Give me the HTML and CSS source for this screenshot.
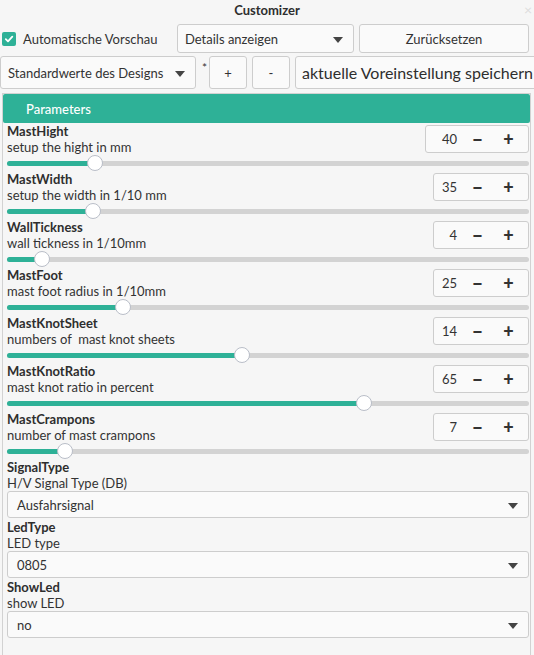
FILE: index.html
```html
<!DOCTYPE html>
<html>
<head>
<meta charset="utf-8">
<link rel="stylesheet" href="styles.css">
</head>
<body>
<div class="window">
  <div class="titlebar">Customizer<span class="close">×</span></div>
  <div class="row1">
    <label class="check"><span class="box"><svg width="10" height="10" viewBox="0 0 10 10"><path d="M1.8 5.2 L4 7.3 L8.3 2.6" fill="none" stroke="#fff" stroke-width="1.8" stroke-linecap="round" stroke-linejoin="round"/></svg></span>Automatische Vorschau</label>
    <div class="select details">Details anzeigen<span class="caret"></span></div>
    <div class="btn reset">Zurücksetzen</div>
  </div>
  <div class="row2">
    <div class="select preset">Standardwerte des Designs<span class="caret"></span></div>
    <span class="star">*</span>
    <div class="btn small">+</div>
    <div class="btn small">-</div>
    <div class="savebox">aktuelle Voreinstellung speichern</div>
  </div>
  <div class="panel">
    <div class="panel-head">Parameters</div>

    <div class="param">
      <div class="texts"><div class="name">MastHight</div><div class="desc">setup the hight in mm</div></div>
      <div class="spin wide"><span class="num">40</span><span class="op">&#x2212;</span><span class="op">+</span></div>
      <div class="slider" style="--v:16.9%"><div class="fill"></div><div class="thumb"></div></div>
    </div>
    <div class="param">
      <div class="texts"><div class="name">MastWidth</div><div class="desc">setup the width in 1/10 mm</div></div>
      <div class="spin"><span class="num">35</span><span class="op">&#x2212;</span><span class="op">+</span></div>
      <div class="slider" style="--v:16.5%"><div class="fill"></div><div class="thumb"></div></div>
    </div>
    <div class="param">
      <div class="texts"><div class="name">WallTickness</div><div class="desc">wall tickness in 1/10mm</div></div>
      <div class="spin"><span class="num">4</span><span class="op">&#x2212;</span><span class="op">+</span></div>
      <div class="slider" style="--v:6.7%"><div class="fill"></div><div class="thumb"></div></div>
    </div>
    <div class="param">
      <div class="texts"><div class="name">MastFoot</div><div class="desc">mast foot radius in 1/10mm</div></div>
      <div class="spin"><span class="num">25</span><span class="op">&#x2212;</span><span class="op">+</span></div>
      <div class="slider" style="--v:22.3%"><div class="fill"></div><div class="thumb"></div></div>
    </div>
    <div class="param">
      <div class="texts"><div class="name">MastKnotSheet</div><div class="desc">numbers of&nbsp; mast knot sheets</div></div>
      <div class="spin"><span class="num">14</span><span class="op">&#x2212;</span><span class="op">+</span></div>
      <div class="slider" style="--v:45%"><div class="fill"></div><div class="thumb"></div></div>
    </div>
    <div class="param">
      <div class="texts"><div class="name">MastKnotRatio</div><div class="desc">mast knot ratio in percent</div></div>
      <div class="spin"><span class="num">65</span><span class="op">&#x2212;</span><span class="op">+</span></div>
      <div class="slider" style="--v:68.3%"><div class="fill"></div><div class="thumb"></div></div>
    </div>
    <div class="param">
      <div class="texts"><div class="name">MastCrampons</div><div class="desc">number of mast crampons</div></div>
      <div class="spin"><span class="num">7</span><span class="op">&#x2212;</span><span class="op">+</span></div>
      <div class="slider" style="--v:11.2%"><div class="fill"></div><div class="thumb"></div></div>
    </div>

    <div class="choice">
      <div class="name">SignalType</div>
      <div class="desc">H/V Signal Type (DB)</div>
      <div class="select full">Ausfahrsignal<span class="caret"></span></div>
    </div>
    <div class="choice">
      <div class="name">LedType</div>
      <div class="desc">LED type</div>
      <div class="select full">0805<span class="caret"></span></div>
    </div>
    <div class="choice">
      <div class="name">ShowLed</div>
      <div class="desc">show LED</div>
      <div class="select full">no<span class="caret"></span></div>
    </div>
  </div>
</div>
</body>
</html>
```

FILE: styles.css
```css
html, body {
  margin: 0;
  padding: 0;
  background: #f6f6f6;
}
body {
  font-family: "Lato", "Noto Sans", sans-serif;
  font-size: 13px;
  color: #333;
  width: 534px;
  height: 655px;
  overflow: hidden;
}
.window {
  position: relative;
  height: 655px;
  overflow: hidden;
}
.titlebar {
  height: 22px;
  line-height: 20px;
  text-align: center;
  font-weight: bold;
  color: #2e2e2e;
}
.close {
  position: absolute;
  right: 2px;
  top: 0;
  font-size: 14px;
  color: #ddd;
  font-weight: normal;
}
.row1 {
  display: flex;
  align-items: center;
  height: 29px;
  margin-top: 2px;
}
.check {
  display: flex;
  align-items: center;
  width: 177px;
  flex: none;
  padding-left: 2px;
  box-sizing: border-box;
}
.box {
  width: 14px;
  height: 14px;
  border-radius: 2px;
  background: #2eb197;
  display: flex;
  align-items: center;
  justify-content: center;
  margin-right: 7px;
}
.select {
  position: relative;
  box-sizing: border-box;
  border: 1px solid #cdcdcd;
  border-radius: 3px;
  background: #fafafa;
  display: flex;
  align-items: center;
  padding-left: 7px;
}
.caret {
  position: absolute;
  right: 10px;
  top: 50%;
  margin-top: -2px;
  width: 0;
  height: 0;
  border-left: 5px solid transparent;
  border-right: 5px solid transparent;
  border-top: 6px solid #444;
}
.details {
  width: 177px;
  height: 29px;
  flex: none;
}
.btn {
  box-sizing: border-box;
  border: 1px solid #cdcdcd;
  border-radius: 3px;
  background: #fafafa;
  display: flex;
  align-items: center;
  justify-content: center;
}
.reset {
  width: 170px;
  height: 29px;
  margin-left: 5px;
  flex: none;
}
.row2 {
  display: flex;
  align-items: center;
  height: 33px;
  margin-top: 3px;
  overflow: hidden;
}
.preset {
  width: 196px;
  height: 33px;
  flex: none;
  padding-left: 7px;
}
.star {
  flex: none;
  width: 13px;
  padding-left: 4px;
  box-sizing: border-box;
  text-align: center;
  align-self: flex-start;
  margin-top: 4px;
  font-size: 12px;
}
.small {
  width: 38px;
  height: 33px;
  flex: none;
  margin-right: 5px;
}
.savebox {
  flex: none;
  width: 260px;
  height: 33px;
  box-sizing: border-box;
  border: 1px solid #cdcdcd;
  border-radius: 3px;
  background: #fafafa;
  font-size: 16px;
  color: #2e2e2e;
  display: flex;
  align-items: center;
  padding-left: 6px;
  white-space: nowrap;
}
.panel {
  margin: 4px 3px 0 2px;
  border: 1px solid #d2d2d2;
  border-bottom: none;
  height: 570px;
  box-sizing: border-box;
}
.panel-head {
  background: #2eb197;
  color: #fff;
  height: 29px;
  line-height: 30px;
  padding-left: 23px;
  border-radius: 2px;
  font-weight: 500;
}
.param {
  display: grid;
  grid-template-columns: 1fr auto;
  padding: 0 1px 0 4px;
}
.texts {
  height: 32px;
}
.name {
  font-weight: bold;
  line-height: 16px;
  height: 16px;
  color: #2e2e2e;
}
.desc {
  line-height: 16px;
  height: 16px;
}
.spin {
  align-self: start;
  margin-top: 2px;
  width: 96px;
  height: 28px;
  box-sizing: border-box;
  border: 1px solid #cdcdcd;
  border-radius: 3px;
  background: #fafafa;
  display: flex;
  align-items: center;
  justify-content: flex-end;
  padding-right: 4px;
}
.spin.wide {
  width: 104px;
}
.num {
  padding-right: 5px;
  color: #333;
}
.op {
  width: 31px;
  text-align: center;
  font-weight: 900;
  font-size: 18px;
  color: #333;
}
.slider {
  grid-column: 1 / 3;
  position: relative;
  height: 16px;
}
.slider::before {
  content: "";
  position: absolute;
  left: 0;
  right: 0;
  top: 6px;
  height: 5px;
  border-radius: 3px;
  background: #d3d3d3;
}
.fill {
  position: absolute;
  left: 0;
  top: 6px;
  height: 5px;
  width: var(--v);
  border-radius: 3px;
  background: #2eb197;
}
.thumb {
  position: absolute;
  left: var(--v);
  top: 8px;
  width: 16px;
  height: 16px;
  margin: -8px 0 0 -8px;
  box-sizing: border-box;
  border: 1px solid #b9bec8;
  border-radius: 50%;
  background: #fff;
}
.choice {
  padding: 0 1px 0 4px;
  height: 60px;
}
.full {
  margin-top: 0;
  height: 27px;
  padding-left: 9px;
}
```
